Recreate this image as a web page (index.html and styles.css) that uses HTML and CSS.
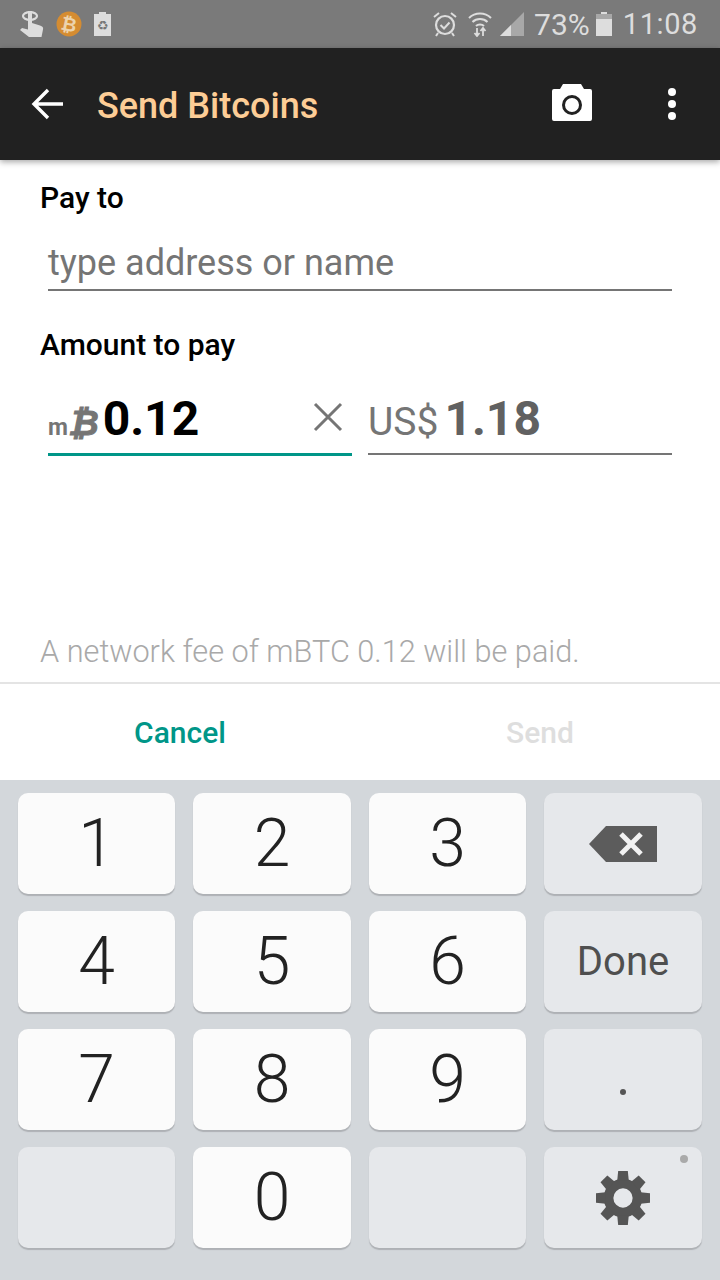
FILE: index.html
```html
<!DOCTYPE html>
<html lang="en">
<head>
    <meta charset="UTF-8">
    <meta name="viewport" content="width=device-width, initial-scale=1.0">
    <title>Send Bitcoins</title>
    <link rel="stylesheet" href="styles.css">
</head>
<body>
    <div class="phone">
        <div class="status-bar">
            <div class="status-left">
                <svg class="icon-touch" width="24" height="26" viewBox="0 0 24 26">
                    <ellipse cx="10" cy="5" rx="7" ry="3.800" fill="none" stroke="#ddd" stroke-width="2.200"/>
                    <path d="M8 0h4v12l8 2.500c2.500 .8 3.500 1.800 3 4l-1.500 7.500H9L0 19l2-2 6 1.500z" fill="#ddd"/>
                </svg>
                <svg class="icon-coin" width="26" height="26" viewBox="0 0 26 26">
                    <circle cx="13" cy="13" r="12.500" fill="#d58c31"/>
                    <text x="13" y="20" text-anchor="middle" class="coin-letter" transform="rotate(12 13 13)">₿</text>
                </svg>
                <svg class="icon-recycle" width="17" height="24" viewBox="0 0 17 24">
                    <path d="M5 0h7v2h5v22H0V2h5z" fill="#ddd"/>
                    <text x="8.500" y="18" text-anchor="middle" class="recycle-glyph">♻</text>
                </svg>
            </div>
            <div class="status-right">
                <svg width="24" height="26" viewBox="0 0 24 26">
                    <circle cx="12" cy="14" r="9" fill="none" stroke="#ddd" stroke-width="2.200"/>
                    <path d="M7.500 14l3.500 3.500 5.500-6" fill="none" stroke="#ddd" stroke-width="2"/>
                    <path d="M1 6l5-4M23 6l-5-4M5 22l-2 3M19 22l2 3" stroke="#ddd" stroke-width="2"/>
                </svg>
                <svg class="icon-wifi" width="24" height="26" viewBox="0 0 24 26">
                    <path d="M1 7c6-6 16-6 22 0M4.500 11c4-4 11-4 15 0M8 15c2-2 6-2 8 0" fill="none" stroke="#ddd" stroke-width="2"/>
                    <path d="M9 17v8M6.500 22l2.500 3 2.500-3M15 25v-8M12.500 20l2.500-3 2.500 3" fill="none" stroke="#ddd" stroke-width="1.800"/>
                </svg>
                <svg class="icon-signal" width="24" height="24" viewBox="0 0 24 24">
                    <path d="M24 0v24H0z" fill="#a8a8a8"/>
                    <path d="M11 13v11H0z" fill="#ddd"/>
                </svg>
                <span class="battery-pct">73%</span>
                <svg class="icon-battery" width="16" height="24" viewBox="0 0 16 24">
                    <path d="M5 0h6v2h5v22H0V2h5z" fill="#ddd"/>
                    <rect x="0" y="2" width="16" height="5" fill="#a8a8a8"/>
                </svg>
                <span class="clock">11:08</span>
            </div>
        </div>

        <header class="app-bar">
            <svg class="back" width="33" height="32" viewBox="0 0 33 32">
                <path d="M32 16H3M17 2L3 16l14 14" fill="none" stroke="#fff" stroke-width="3.400"/>
            </svg>
            <h1 class="title">Send Bitcoins</h1>
            <svg class="camera" width="40" height="37" viewBox="0 0 40 37">
                <path d="M2 5h6l3-5h18l3 5h6a2 2 0 0 1 2 2v28a2 2 0 0 1-2 2H2a2 2 0 0 1-2-2V7a2 2 0 0 1 2-2z" fill="#fff"/>
                <circle cx="20" cy="21" r="8.500" fill="#fff" stroke="#212121" stroke-width="3"/>
            </svg>
            <div class="overflow"><i></i><i></i><i></i></div>
        </header>

        <main class="form">
            <label class="field-label">Pay to</label>
            <div class="address">type address or name</div>
            <label class="field-label amount-label">Amount to pay</label>
            <div class="amount-row">
                <div class="amount amount-active">
                    <span class="unit-m">m</span><span class="unit-btc">₿</span><span class="value">0.12</span>
                    <svg class="clear" width="30" height="30" viewBox="0 0 30 30">
                        <path d="M2 2l26 26M28 2L2 28" stroke="#757575" stroke-width="3"/>
                    </svg>
                </div>
                <div class="amount">
                    <span class="unit-usd">US$</span><span class="value value-usd">1.18</span>
                </div>
            </div>
            <p class="fee">A network fee of mBTC 0.12 will be paid.</p>
        </main>

        <div class="actions">
            <div class="action action-cancel">Cancel</div>
            <div class="action action-send">Send</div>
        </div>

        <div class="keyboard">
            <div class="key">1</div>
            <div class="key">2</div>
            <div class="key">3</div>
            <div class="key key-fn">
                <svg width="68" height="36" viewBox="0 0 68 36">
                    <path d="M17 0h51v36H17L0 18z" fill="#5c5c5c"/>
                    <path d="M32 8l20 20M52 8L32 28" stroke="#f2f2f2" stroke-width="5"/>
                </svg>
            </div>
            <div class="key">4</div>
            <div class="key">5</div>
            <div class="key">6</div>
            <div class="key key-fn key-done">Done</div>
            <div class="key">7</div>
            <div class="key">8</div>
            <div class="key">9</div>
            <div class="key key-fn key-dot"><i></i></div>
            <div class="key key-blank"></div>
            <div class="key">0</div>
            <div class="key key-blank"></div>
            <div class="key key-fn">
                <svg width="54" height="54" viewBox="0 0 56 56">
                    <circle cx="28" cy="28" r="15" fill="none" stroke="#555" stroke-width="10"/>
                    <g fill="#555">
                        <path d="M23 0h10l1 10H22z"/>
                        <path d="M23 0h10l1 10H22z" transform="rotate(45 28 28)"/>
                        <path d="M23 0h10l1 10H22z" transform="rotate(90 28 28)"/>
                        <path d="M23 0h10l1 10H22z" transform="rotate(135 28 28)"/>
                        <path d="M23 0h10l1 10H22z" transform="rotate(180 28 28)"/>
                        <path d="M23 0h10l1 10H22z" transform="rotate(225 28 28)"/>
                        <path d="M23 0h10l1 10H22z" transform="rotate(270 28 28)"/>
                        <path d="M23 0h10l1 10H22z" transform="rotate(315 28 28)"/>
                    </g>
                </svg>
                <span class="key-hint"></span>
            </div>
        </div>
    </div>
</body>
</html>
```

FILE: styles.css
```css
* {
    box-sizing: border-box;
}

body {
    margin: 0;
    font-family: 'Roboto', 'Liberation Sans', sans-serif;
    background-color: #fff;
}

.phone {
    width: 720px;
    height: 1280px;
    display: flex;
    flex-direction: column;
    overflow: hidden;
}

/* status bar */
.status-bar {
    height: 48px;
    flex: none;
    background-color: #7a7a7a;
    display: flex;
    justify-content: space-between;
    align-items: center;
    padding: 0 22px 0 20px;
    color: #ddd;
}

.status-left,
.status-right {
    display: flex;
    align-items: center;
}

.status-left {
    gap: 12px;
}

.coin-letter {
    font-family: 'DejaVu Sans', sans-serif;
    font-size: 19px;
    font-weight: 700;
    fill: #ecd3ad;
}

.recycle-glyph {
    font-family: 'DejaVu Sans', sans-serif;
    font-size: 13px;
    fill: #777;
}

.icon-wifi {
    margin-left: 11px;
}

.icon-signal {
    margin-left: 8px;
}

.battery-pct {
    font-size: 30px;
    margin-left: 10px;
}

.icon-battery {
    margin-left: 6px;
}

.clock {
    font-size: 29px;
    margin-left: 11px;
    letter-spacing: 0.6px;
}

/* app bar */
.app-bar {
    height: 112px;
    flex: none;
    background-color: #212121;
    display: flex;
    align-items: center;
    padding: 0 0 0 31px;
    box-shadow: 0 2px 6px rgba(0, 0, 0, 0.35);
    position: relative;
}

.title {
    margin: 3px 0 0 33px;
    font-size: 36px;
    font-weight: 500;
    color: #fdcd96;
    flex: 1;
}

.camera {
    margin-right: 76px;
    margin-bottom: 4px;
}

.overflow {
    display: flex;
    flex-direction: column;
    gap: 4px;
    margin-right: 44px;
}

.overflow i {
    width: 8px;
    height: 8px;
    border-radius: 50%;
    background-color: #fff;
}

/* form */
.form {
    flex: 1;
    padding: 21px 48px 0;
    position: relative;
}

.field-label {
    display: block;
    margin-left: -8px;
    font-size: 30px;
    line-height: 34px;
    font-weight: 500;
    color: #000;
}

.address {
    margin-top: 15px;
    height: 61px;
    padding-top: 9px;
    line-height: 48px;
    font-size: 36px;
    color: #757575;
    border-bottom: 2px solid #757575;
}

.amount-label {
    margin-top: 37px;
}

.amount-row {
    display: flex;
    align-items: flex-start;
    gap: 16px;
    margin-top: 17px;
}

.amount {
    width: 304px;
    height: 76px;
    padding-top: 11px;
    display: flex;
    align-items: baseline;
    border-bottom: 2px solid #757575;
    position: relative;
}

.amount-active {
    height: 77px;
    border-bottom: 3px solid #009688;
}

.unit-m {
    font-size: 23px;
    font-weight: 700;
    color: #757575;
}

.unit-btc {
    font-family: 'DejaVu Sans', sans-serif;
    font-size: 35px;
    font-weight: 700;
    font-style: italic;
    color: #757575;
    -webkit-text-stroke: 1px #757575;
}

.unit-usd {
    font-size: 39px;
    color: #757575;
}

.value {
    font-size: 48px;
    font-weight: 700;
    color: #000;
    margin-left: 4px;
}

.value-usd {
    color: #616161;
    margin-left: 6px;
}

.clear {
    position: absolute;
    right: 9px;
    top: 23px;
}

.fee {
    position: absolute;
    left: 40px;
    bottom: 13px;
    margin: 0;
    font-size: 30.700px;
    font-weight: 300;
    color: #a9a9a9;
}

/* cancel / send */
.actions {
    height: 98px;
    flex: none;
    display: flex;
    border-top: 2px solid #e4e4e4;
}

.action {
    width: 360px;
    text-align: center;
    line-height: 98px;
    font-size: 30px;
    font-weight: 500;
}

.action-cancel {
    color: #009688;
}

.action-send {
    color: #dedede;
}

/* keypad */
.keyboard {
    height: 500px;
    flex: none;
    background-color: #d3d7db;
    padding: 13px 18px 32px;
    display: grid;
    grid-template-columns: 157px 158px 157px 158px;
    grid-auto-rows: 101px;
    column-gap: 18px;
    row-gap: 17px;
}

.key {
    background-color: #fbfbfb;
    border-radius: 10px;
    box-shadow: 0 2px 1px #aeb1b5;
    display: flex;
    align-items: center;
    justify-content: center;
    font-size: 66px;
    font-weight: 300;
    color: #222;
    position: relative;
}

.key-fn,
.key-blank {
    background-color: #e6e8eb;
}

.key-done {
    font-size: 40px;
    font-weight: 400;
    color: #4f4f4f;
}

.key-dot i {
    width: 6px;
    height: 6px;
    margin-top: 24px;
    border-radius: 50%;
    background-color: #555;
}

.key-hint {
    position: absolute;
    top: 8px;
    right: 14px;
    width: 8px;
    height: 8px;
    border-radius: 50%;
    background-color: #aaa;
}
```
